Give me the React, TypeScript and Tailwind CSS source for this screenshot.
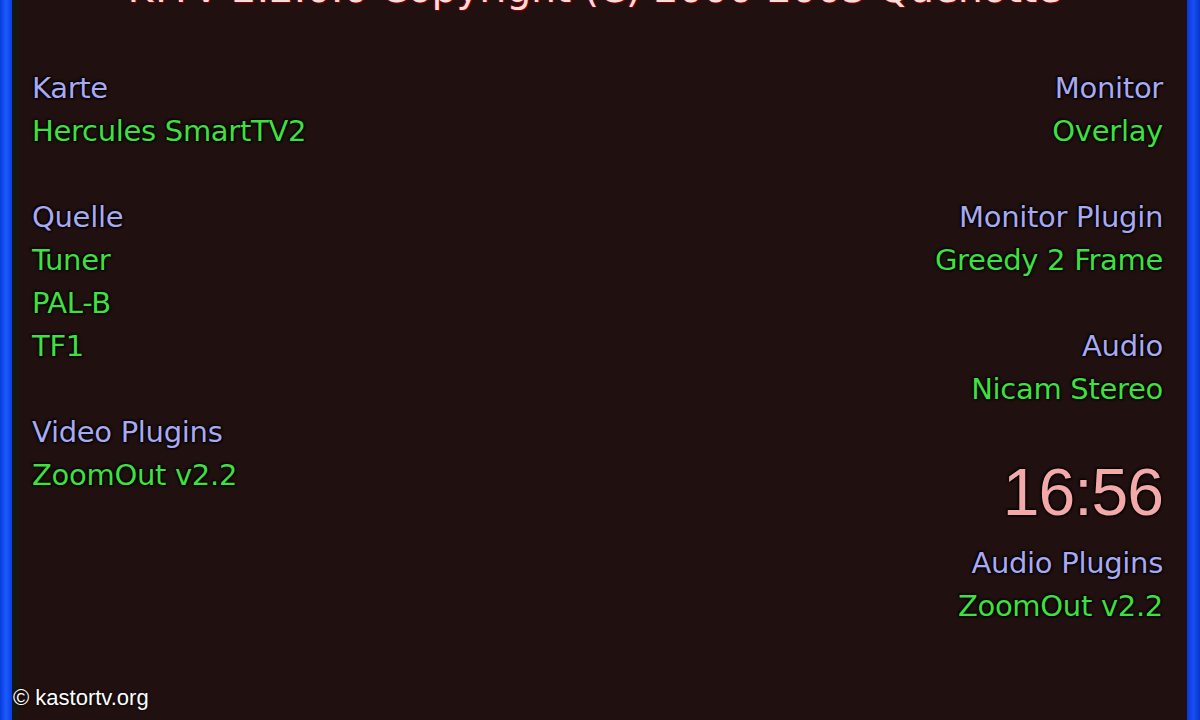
import React from 'react';

const glow = '[text-shadow:0_0_3px_#000,1px_1px_2px_#000,-1px_-1px_2px_#000]';

type Line = { text: string; kind: 'label' | 'value' | 'gap' };

const leftLines: Line[] = [
  { text: 'Karte', kind: 'label' },
  { text: 'Hercules SmartTV2', kind: 'value' },
  { text: '', kind: 'gap' },
  { text: 'Quelle', kind: 'label' },
  { text: 'Tuner', kind: 'value' },
  { text: 'PAL-B', kind: 'value' },
  { text: 'TF1', kind: 'value' },
  { text: '', kind: 'gap' },
  { text: 'Video Plugins', kind: 'label' },
  { text: 'ZoomOut v2.2', kind: 'value' },
];

const rightTop: Line[] = [
  { text: 'Monitor', kind: 'label' },
  { text: 'Overlay', kind: 'value' },
  { text: '', kind: 'gap' },
  { text: 'Monitor Plugin', kind: 'label' },
  { text: 'Greedy 2 Frame', kind: 'value' },
  { text: '', kind: 'gap' },
  { text: 'Audio', kind: 'label' },
  { text: 'Nicam Stereo', kind: 'value' },
];

const rightBottom: Line[] = [
  { text: 'Audio Plugins', kind: 'label' },
  { text: 'ZoomOut v2.2', kind: 'value' },
];

function Row({ line }: { line: Line }) {
  if (line.kind === 'gap') return <div className="h-[43px]" />;
  return (
    <div
      className={`h-[43px] leading-[43px] whitespace-nowrap ${glow} ${
        line.kind === 'label' ? 'text-[#a9a9f2]' : 'text-[#3fe03f]'
      }`}
    >
      {line.text}
    </div>
  );
}

export default function App() {
  return (
    <div className="relative w-[1200px] h-[720px] overflow-hidden bg-[#201010] flex font-['DejaVu_Sans',sans-serif]">
      {/* left frame */}
      <div className="w-[12px] shrink-0 bg-gradient-to-r from-[#0a3ad8] via-[#1a5cff] to-[#0c3ce0]" />
      <div className="w-[10px] shrink-0 bg-gradient-to-r from-[#0e1a14] to-[#201010]" />

      <div className="flex-1 flex flex-col">
        {/* title, cut at the top edge */}
        <div className="h-[67px] flex justify-center">
          <div className="-mt-[31px] ml-[-20px] text-[39px] leading-[40px] text-[#f4dede] whitespace-nowrap [text-shadow:0_0_2px_#b00000,1px_1px_1px_#800000,-1px_-1px_1px_#800000]">
            K!TV 2.2.0.0 Copyright (C) 2000-2003 Quenotte
          </div>
        </div>

        <div className="flex justify-between pl-[10px] pr-[24px] text-[29px] tracking-[-0.3px]">
          <div className="flex flex-col">
            {leftLines.map((l, i) => (
              <Row key={i} line={l} />
            ))}
          </div>

          <div className="flex flex-col items-end">
            {rightTop.map((l, i) => (
              <Row key={i} line={l} />
            ))}
            <div
              className={`mt-[49px] mb-[18px] font-['Liberation_Sans',sans-serif] text-[66px] leading-[64px] tracking-[-1px] text-[#f4a8a8] ${glow}`}
            >
              16:56
            </div>
            {rightBottom.map((l, i) => (
              <Row key={i} line={l} />
            ))}
          </div>
        </div>
      </div>

      {/* right frame */}
      <div className="w-[13px] shrink-0 bg-gradient-to-r from-[#0c38d0] via-[#1650f4] to-[#0a34c8]" />

      {/* watermark */}
      <div className="absolute left-[13px] bottom-[9px] text-[22px] leading-[26px] text-white font-['Liberation_Sans',sans-serif] [text-shadow:0_0_3px_#000]">
        © kastortv.org
      </div>
    </div>
  );
}
